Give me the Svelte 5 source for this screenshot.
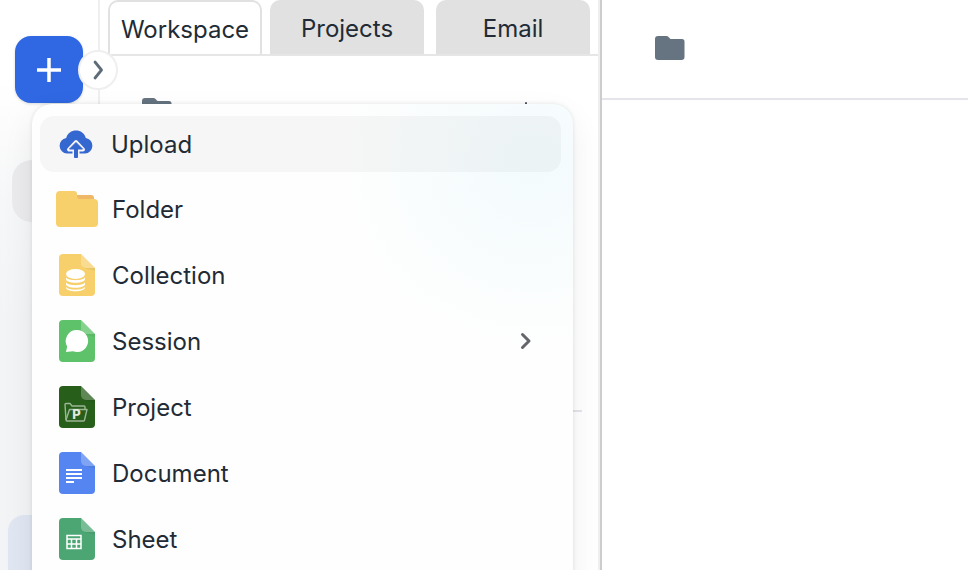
<script>
  const tabs = ["Workspace", "Projects", "Email"];
  const createItems = [
    { id: "folder", label: "Folder" },
    { id: "collection", label: "Collection", color: "#f7d06c" },
    { id: "session", label: "Session", color: "#5dc269", submenu: true },
    { id: "project", label: "Project", color: "#265e1a" },
    { id: "document", label: "Document", color: "#5485f0" },
    { id: "sheet", label: "Sheet", color: "#4ba673" },
  ];

  let activeTab = $state("Workspace");
  let menuOpen = $state(true);
</script>

{#snippet smallFolder()}
  <svg class="small-folder" viewBox="0 0 30 24" aria-hidden="true">
    <path d="M3 0h8.500a3 3 0 0 1 2 1l2 2H27a2.500 2.500 0 0 1 2.500 2.500V21a3 3 0 0 1-3 3H3a3 3 0 0 1-3-3V3a3 3 0 0 1 3-3Z" fill="#667482" />
  </svg>
{/snippet}

<div class="app">
  <nav class="rail" aria-label="Main">
    <button class="create" aria-label="Create" aria-expanded={menuOpen} onclick={() => (menuOpen = !menuOpen)}>
      <svg width="24" height="24" viewBox="0 0 24 24"><path d="M12 0v24M0 12h24" stroke="#fff" stroke-width="3.500" /></svg>
    </button>
    <button class="rail-item" aria-label="Home"></button>
    <button class="rail-item current" aria-label="Files"></button>
    <button class="expand" aria-label="Expand">
      <svg width="14" height="22" viewBox="0 0 14 22"><path d="M4 3 10.500 11 4 19" fill="none" stroke="#5d6c78" stroke-width="2.800" stroke-linecap="round" stroke-linejoin="round" /></svg>
    </button>
  </nav>

  <section class="panel">
    <div class="tabs" role="tablist">
      {#each tabs as tab}
        <button
          class="tab"
          class:active={tab === activeTab}
          role="tab"
          aria-selected={tab === activeTab}
          onclick={() => (activeTab = tab)}>{tab}</button
        >
      {/each}
    </div>
    <div class="tree">
      <div class="tree-row">
        {@render smallFolder()}
        <svg class="add" viewBox="0 0 16 16" aria-hidden="true"><path d="M8 1v14M1 8h14" stroke="#4d5560" stroke-width="2" stroke-linecap="round" /></svg>
      </div>
    </div>
  </section>

  <main class="content">
    <header>{@render smallFolder()}</header>
  </main>

  {#if menuOpen}
    <div class="menu" role="menu">
      <button class="item hovered" role="menuitem">
        <svg class="icon" viewBox="0 0 44 44" aria-hidden="true">
          <path d="M12 31.500a7.800 7.800 0 0 1-.8-15.500C12.500 11 16.500 8.500 21 8.500S29.500 11 30.800 16a7.800 7.800 0 0 1-.8 15.500Z" fill="#3567d0" />
          <path d="M21 20l-7 7.500h5.500V36h3v-8.500H28Z" fill="none" stroke="#f5f5f6" stroke-width="4" stroke-linejoin="round" />
          <path d="M21 20.500l-6.500 6.500h5V35.500h3V27h5Z" fill="#3567d0" stroke="#3567d0" stroke-width="1" stroke-linejoin="round" />
        </svg>
        <span class="label">Upload</span>
      </button>

      <div class="group">
        {#each createItems as item}
          <button class="item" role="menuitem">
            <svg class="icon" viewBox="0 0 44 44" aria-hidden="true">
              {#if item.id === "folder"}
                <path d="M20 8h16a3 3 0 0 1 3 3v5H20Z" fill="#efb866" />
                <path d="M5 4h14a3 3 0 0 1 3 3v2a3 3 0 0 0 3 3h14a4 4 0 0 1 4 4v20a4 4 0 0 1-4 4H5a4 4 0 0 1-4-4V8a4 4 0 0 1 4-4Z" fill="#f7d06c" />
              {:else}
                <path d="M8 1h18l14 14v24a4 4 0 0 1-4 4H8a4 4 0 0 1-4-4V5a4 4 0 0 1 4-4Z" fill={item.color} />
                <path d="m26 1 14 14h-9a5 5 0 0 1-5-5Z" fill="#fff" fill-opacity=".26" />
                <path d="M29 15h11v3Z" fill="#000" fill-opacity=".05" />
              {/if}

              {#if item.id === "collection"}
                <g fill="#fff">
                  <ellipse cx="20.500" cy="21" rx="9.500" ry="5" />
                  <path d="M11 24.500c2 3.500 17 3.500 19 0v1.500c0 5-19 5-19 0ZM11 29.500c2 3.500 17 3.500 19 0v1.500c0 5-19 5-19 0ZM11 34c2 3.500 17 3.500 19 0v.5c0 5-19 5-19 0Z" />
                </g>
              {:else if item.id === "session"}
                <path d="M22 11a11 11 0 1 1-4 21.200L11 33l1.200-5.500A11 11 0 0 1 22 11Z" fill="#fff" />
              {:else if item.id === "project"}
                <g fill="none" stroke="#9db695" stroke-width="1.400" stroke-linejoin="round">
                  <path d="M11 35 10 19.500a1 1 0 0 1 1-1h4l2 2.500h12a1 1 0 0 1 1 1v2" />
                  <path d="m11 35 3.500-10.500H32L29.500 35a1 1 0 0 1-1 1H12a1 1 0 0 1-1-1Z" />
                </g>
                <text x="21.500" y="34" text-anchor="middle" class="letter">P</text>
              {:else if item.id === "document"}
                <path d="M11 19h16M11 23h16M11 27h16M11 31h8" stroke="#fff" stroke-width="2" />
              {:else if item.id === "sheet"}
                <path d="M12 18.500h14v13H12ZM12 22h14M12 27h14M16.500 22v9.500M21.500 22v9.500" fill="none" stroke="#fff" stroke-width="1.500" />
              {/if}
            </svg>
            <span class="label">{item.label}</span>
            {#if item.submenu}
              <svg class="arrow" viewBox="0 0 12 18" aria-hidden="true"><path d="m2.500 2.500 6.500 6.500-6.500 6.500" fill="none" stroke="#64666c" stroke-width="3" stroke-linecap="round" stroke-linejoin="round" /></svg>
            {/if}
          </button>
        {/each}
      </div>
    </div>
  {/if}
</div>

<style>
  :global(body) {
    margin: 0;
    background: #fff;
  }

  .app {
    position: relative;
    display: flex;
    height: 100vh;
    overflow: hidden;
    font-family: Inter, "Liberation Sans", sans-serif;
    font-size: 24px;
    color: #222b35;
  }

  button {
    font: inherit;
    color: inherit;
    border: 0;
    padding: 0;
    background: none;
    cursor: pointer;
  }

  svg {
    display: block;
  }

  .rail {
    position: relative;
    z-index: 1;
    display: flex;
    flex-direction: column;
    align-items: center;
    flex: none;
    width: 98px;
    padding-top: 36px;
    border-right: 2px solid #efefef;
    background: linear-gradient(#fff 80px, #f6f7f8 200px, #f2f4f6 320px);
  }

  .create {
    display: grid;
    place-items: center;
    flex: none;
    width: 68px;
    height: 67px;
    border-radius: 16px;
    background: #2f68e2;
    box-shadow: 0 1px 3px rgba(0, 0, 0, 0.15);
  }

  .rail-item {
    flex: none;
    width: 74px;
    height: 62px;
    margin-top: 57px;
    border-radius: 20px;
    background: #ebebed;
  }

  .rail-item.current {
    width: 82px;
    height: 80px;
    margin-top: 293px;
    border-radius: 16px;
    background: #e1e7f2;
  }

  /* sits over the rail border */
  .expand {
    position: absolute;
    top: 50px;
    right: -20px;
    display: grid;
    place-items: center;
    width: 40px;
    height: 40px;
    border: 2px solid #efefef;
    border-radius: 50%;
    background: #fff;
  }

  .panel {
    flex: none;
    width: 500px;
    box-sizing: border-box;
    border-right: 2px solid #efefef;
  }

  .tabs {
    display: flex;
    gap: 12px;
    margin-left: 8px;
    height: 54px;
    border-bottom: 2px solid #e6e6e6;
  }

  .tab {
    width: 154px;
    border-radius: 10px 10px 0 0;
    background: #e1e1e1;
    padding-top: 2px;
  }

  .tab.active {
    margin-right: -4px;
    border: 2px solid #e1e1e1;
    border-bottom: 0;
    background: #fff;
  }

  .tree {
    margin-right: 16px;
    height: 354px;
    border-bottom: 2px solid #e4e5ea;
  }

  .tree-row {
    display: flex;
    justify-content: space-between;
    align-items: center;
    padding: 42px 48px 0 42px;
  }

  .add {
    width: 16px;
    height: 16px;
  }

  .small-folder {
    width: 30px;
    height: 24px;
  }

  .content {
    flex: 1;
    border-left: 2px solid #ccc;
    background: #fff;
  }

  .content header {
    display: flex;
    align-items: center;
    height: 96px;
    padding-left: 53px;
    padding-bottom: 2px;
    border-bottom: 2px solid #e4e4ea;
  }

  .menu {
    position: absolute;
    z-index: 2;
    top: 104px;
    left: 32px;
    width: 541px;
    box-sizing: border-box;
    padding: 12px 12px 48px 8px;
    border-radius: 20px;
    background:
      radial-gradient(ellipse 200px 190px at 500px 60px, #f3fbfd, rgba(243, 251, 253, 0)),
      #fefefe;
    box-shadow: 0 0 4px rgba(0, 0, 0, 0.1), 0 12px 32px rgba(0, 0, 0, 0.07);
  }

  .group {
    display: flex;
    flex-direction: column;
    gap: 10px;
    margin-top: 9px;
  }

  .item {
    display: flex;
    align-items: center;
    gap: 12px;
    width: 100%;
    height: 56px;
    padding: 0 29px 0 15px;
    border-radius: 14px;
    text-align: left;
  }

  .group .item {
    gap: 13px;
  }

  .item.hovered,
  .item:hover {
    background: rgba(60, 60, 70, 0.045);
  }

  .icon {
    flex: none;
    width: 44px;
    height: 44px;
  }

  .label {
    flex: 1;
  }

  .arrow {
    width: 12px;
    height: 18px;
  }

  .letter {
    font-size: 13px;
    font-weight: 800;
    fill: #dfe8dc;
  }
</style>
